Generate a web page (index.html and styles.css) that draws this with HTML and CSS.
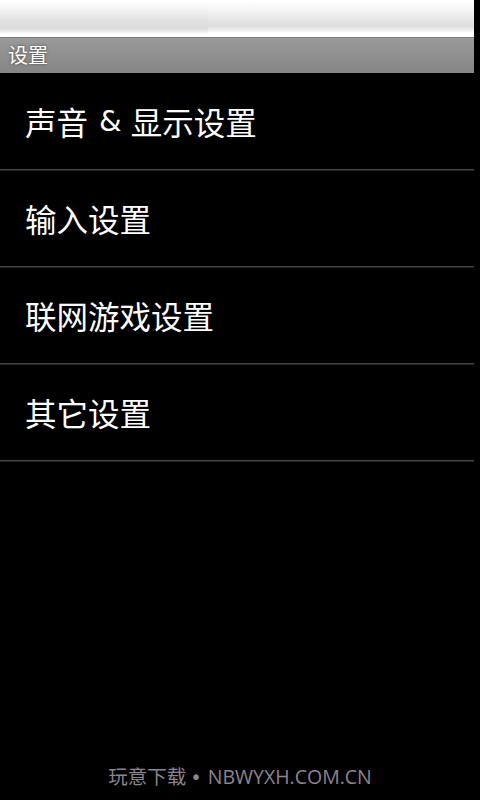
FILE: index.html
```html
<!DOCTYPE html>
<html lang="zh">
<head>
<meta charset="utf-8">
<link rel="stylesheet" href="styles.css">
</head>
<body>
<div class="screen">
  <div class="statusbar">
    <div class="notify"></div>
    <div class="icons"></div>
  </div>
  <div class="titlebar">设置</div>
  <ul class="list">
    <li class="item">声音<span class="amp">&amp;</span>显示设置</li>
    <li class="item">输入设置</li>
    <li class="item">联网游戏设置</li>
    <li class="item">其它设置</li>
  </ul>
  <div class="footer">玩意下载<span class="dot">•</span><span class="url">NBWYXH.COM.CN</span></div>
</div>
</body>
</html>
```
FILE: styles.css
```css
html, body {
  margin: 0;
  padding: 0;
  background: #000;
}
.screen {
  width: 480px;
  height: 800px;
  display: flex;
  flex-direction: column;
  font-family: "Noto Sans CJK SC", "Noto Sans", sans-serif;
  overflow: hidden;
}
.statusbar {
  width: 474px;
  height: 37px;
  display: flex;
}
.notify {
  width: 208px;
  background: linear-gradient(to bottom, #ffffff 0px, #f6f6f6 8px, #e2e2e2 20px, #dcdcdc 28px, #e8e8e8 31px, #ffffff 34px, #ffffff 37px);
}
.icons {
  flex: 1;
  background: linear-gradient(to bottom, #ffffff 0px, #f8f8f8 8px, #e6e6e6 20px, #dedede 26px, #e8e8e8 29px, #ffffff 33px, #ffffff 37px);
}
.titlebar {
  width: 466px;
  height: 35px;
  padding-left: 8px;
  background: linear-gradient(to bottom, #9a9a9a, #858585);
  border-top: 1px solid #7a7a7a;
  color: #fff;
  font-size: 20px;
  line-height: 34px;
  text-shadow: 0 0 3px #444;
}
.list {
  list-style: none;
  margin: 0;
  padding: 0;
  width: 474px;
}
.item {
  height: 96px;
  border-bottom: 1px solid #444;
  display: flex;
  align-items: center;
  padding-left: 25px;
  color: #fff;
  font-size: 31.5px;
  box-shadow: 0 1px 0 #222;
}
.amp {
  margin: 0 9px 0 11px;
  font-family: "DejaVu Sans", sans-serif;
  font-size: 29px;
}
.footer {
  margin-top: auto;
  margin-bottom: 9px;
  text-align: center;
  color: #8c8490;
  font-size: 19.5px;
  line-height: 26px;
}
.dot {
  margin: 0 6px 0 4px;
  font-family: "DejaVu Sans", sans-serif;
}
.url {
  font-family: "Open Sans", sans-serif;
}
```
